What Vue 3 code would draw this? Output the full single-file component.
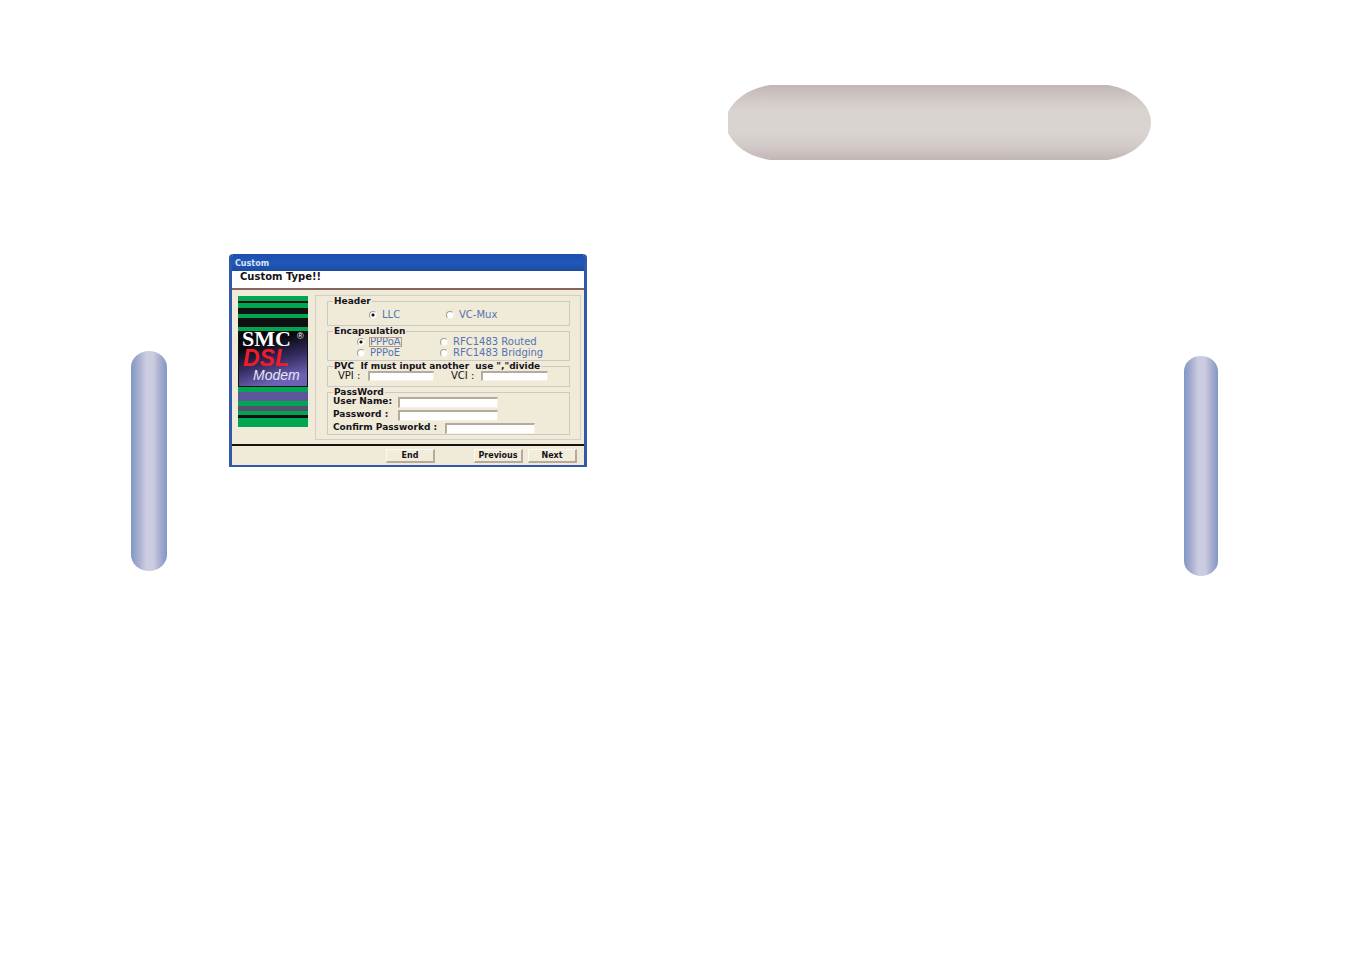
<script setup>
import { ref } from 'vue'
const header = ref('LLC')
const encap = ref('PPPoA')
const stripes = [
  [0, 5, '#00a650'], [5, 2, '#101012'], [7, 5, '#00a650'], [12, 6, '#101012'],
  [18, 4, '#00a650'], [22, 9, '#101012'], [31, 4, '#00a650'],
  [91, 5, '#00a650'], [96, 9, '#5d549c'], [105, 5, '#00a650'], [110, 5, '#564f70'],
  [115, 4, '#00a650'], [119, 3, '#101012'], [122, 9, '#00a650'],
]
</script>

<template>
  <main class="spread">
    <div class="tab tab-left"></div>
    <form class="dialog" @submit.prevent>
      <div class="title">Custom</div>
      <h1 class="heading">Custom Type!!</h1>
      <div class="body">
        <svg class="brand" viewBox="0 0 70 131" preserveAspectRatio="none" role="img" aria-label="SMC DSL Modem">
          <defs>
            <linearGradient id="night" x1="0" y1="0" x2="0.35" y2="1">
              <stop offset="0.3" stop-color="#08080c" />
              <stop offset="0.65" stop-color="#342c60" />
              <stop offset="1" stop-color="#6c62b4" />
            </linearGradient>
          </defs>
          <rect v-for="s in stripes" :key="s[0]" x="0" :y="s[0]" width="70" :height="s[1]" :fill="s[2]" />
          <rect x="0" y="35" width="70" height="56" fill="#101012" />
          <rect x="1" y="35" width="68" height="55" fill="url(#night)" />
          <text x="4" y="50" class="smc">SMC</text>
          <text x="59" y="43" class="reg">®</text>
          <text x="5" y="70" class="dsl">DSL</text>
          <text x="15" y="84" class="modem">Modem</text>
        </svg>
        <div class="panel">
          <fieldset class="group-header">
            <legend>Header</legend>
            <div class="choices">
              <label class="opt"><input v-model="header" type="radio" name="header" value="LLC"><span>LLC</span></label>
              <label class="opt"><input v-model="header" type="radio" name="header" value="VC-Mux"><span>VC-Mux</span></label>
            </div>
          </fieldset>
          <fieldset class="group-encap">
            <legend>Encapsulation</legend>
            <div class="choices">
              <label class="opt"><input v-model="encap" type="radio" name="encap" value="PPPoA"><span class="focus">PPPoA</span></label>
              <label class="opt"><input v-model="encap" type="radio" name="encap" value="Routed"><span>RFC1483 Routed</span></label>
              <label class="opt"><input v-model="encap" type="radio" name="encap" value="PPPoE"><span>PPPoE</span></label>
              <label class="opt"><input v-model="encap" type="radio" name="encap" value="Bridging"><span>RFC1483 Bridging</span></label>
            </div>
          </fieldset>
          <fieldset class="group-pvc">
            <legend>PVC&nbsp; If must input another&nbsp; use ","divide</legend>
            <div class="pvc">
              <label for="vpi">VPI :</label><input id="vpi" type="text">
              <label for="vci">VCI :</label><input id="vci" type="text">
            </div>
          </fieldset>
          <fieldset class="group-pass">
            <legend>PassWord</legend>
            <div class="row"><label for="user">User Name:</label><input id="user" type="text"></div>
            <div class="row"><label for="pass">Password :</label><input id="pass" type="password"></div>
            <div class="row confirm"><label for="again">Confirm Passworkd :</label><input id="again" type="password"></div>
          </fieldset>
        </div>
      </div>
      <div class="footer">
        <button type="button" class="end">End</button>
        <button type="button">Previous</button>
        <button type="submit">Next</button>
      </div>
    </form>
    <svg class="banner" viewBox="0 0 423 75" preserveAspectRatio="none" aria-hidden="true">
      <defs>
        <linearGradient id="pill" x1="0" y1="0" x2="0" y2="1">
          <stop offset="0" stop-color="#c1b6b5" />
          <stop offset="0.2" stop-color="#d2cac8" />
          <stop offset="0.36" stop-color="#d9d4d0" />
          <stop offset="0.64" stop-color="#d9d4d0" />
          <stop offset="0.82" stop-color="#d2cac8" />
          <stop offset="1" stop-color="#c1b6b5" />
        </linearGradient>
      </defs>
      <path d="M42 0H380C405 4 423 20 423 37.500S405 71 380 75H42C22 72 7 62 0 48V27C7 13 22 3 42 0Z" fill="url(#pill)" />
    </svg>
    <div class="tab tab-right"></div>
  </main>
</template>

<style>
body { margin: 0; background: #fff; }
</style>

<style scoped>
.spread {
  display: grid;
  grid-template-columns: 131fr 36fr 62fr 358fr 141fr 423fr 33fr 34fr 133fr;
  align-items: start;
  padding: 85px 0;
  font: bold 9px/10px "DejaVu Sans", sans-serif;
  color: #15131a;
}
.tab {
  height: 220px;
  border-radius: 18px / 16px;
  background: linear-gradient(90deg, #7f98c4, #a9aed0 22%, #cccce1 42%, #cccce1 62%, #a9aed0 80%, #7f98c4);
}
.tab-left { grid-column: 2; margin-top: 266px; }
.tab-right { grid-column: 8; margin-top: 271px; }
.banner { grid-column: 6; width: 100%; height: 75px; display: block; }
.dialog {
  grid-column: 4;
  margin-top: 169px;
  box-sizing: border-box;
  border: solid #3057ab;
  border-width: 0 3px 2px;
  border-radius: 4px 4px 0 0;
  background: #f0ead8;
  overflow: hidden;
}
.title {
  padding: 5px 3px 2px;
  background: linear-gradient(#1a50ae, #2058b8 50%, #1c4ba2);
  color: #dce4f4;
  font-size: 8px;
}
.heading {
  margin: 0;
  padding: 0 8px 5px;
  background: #fff;
  border-bottom: 2px solid #85655f;
  font-size: 10px;
  line-height: 12px;
  font-weight: bold;
}
.body {
  display: grid;
  grid-template-columns: 70px 1fr;
  gap: 7px;
  padding: 5px 3px 4px 6px;
}
.brand { display: block; width: 70px; height: 131px; margin-top: 1px; }
.smc { font: bold 22px "Liberation Serif", serif; fill: #fff; }
.reg { font: 9px "Liberation Sans", sans-serif; fill: #fff; }
.dsl { font: italic bold 23px "Liberation Sans", sans-serif; fill: #ee1c2e; }
.modem { font: italic 14px "Liberation Sans", sans-serif; fill: #e8e6f4; }
.panel { border: 1px solid #d2d0c6; padding: 0 10px 4px 11px; }
fieldset {
  box-sizing: border-box;
  min-width: 0;
  margin: 0;
  padding: 0 5px;
  border: 1px solid #cbcac2;
}
legend { padding: 0 1px; line-height: 10px; white-space: nowrap; }
.group-header { height: 30px; }
.group-encap { height: 35px; }
.group-pvc { height: 26px; }
.group-pass { height: 48px; }
.choices { display: grid; grid-template-columns: 83px 1fr; padding-left: 24px; }
.group-header .choices { grid-template-columns: 77px 1fr; padding: 3px 0 0 36px; }
.opt { display: flex; align-items: center; gap: 5px; height: 11px; color: #5474b4; font-size: 10px; font-weight: normal; white-space: nowrap; }
.opt input {
  appearance: none;
  box-sizing: border-box;
  flex: none;
  width: 8px;
  height: 8px;
  margin: 0;
  border: 1px solid;
  border-color: #a49f92 #f6f3ea #f6f3ea #a49f92;
  border-radius: 50%;
  background: #fff;
}
.opt input:checked { background: radial-gradient(circle, #111 1px, #fff 2px); }
.focus { outline: 1px solid #b39a82; line-height: 8px; }
input[type="text"], input[type="password"] {
  box-sizing: border-box;
  height: 11px;
  min-width: 0;
  margin: 0;
  padding: 0 2px;
  border: solid;
  border-width: 2px 1px 1px 2px;
  border-color: #b5aaa0 #f4f0e4 #f4f0e4 #b5aaa0;
  background: #fff;
  font: inherit;
}
.pvc { display: grid; grid-template-columns: 30px 66px 17px 30px 67px; padding-left: 5px; line-height: 9px; }
.pvc label { white-space: nowrap; font-weight: normal; font-size: 10px; }
.pvc input { height: 10px; }
#vci { grid-column: 5; }
.pvc label[for="vci"] { grid-column: 4; }
.row { display: flex; align-items: flex-start; height: 11px; margin-bottom: 2px; line-height: 8px; white-space: nowrap; }
.row label { width: 65px; }
.row input { width: 100px; }
.row.confirm label { width: 112px; }
.row.confirm input { width: 90px; }
.footer {
  display: flex;
  justify-content: flex-end;
  gap: 5px;
  border-top: 2px solid #16100f;
  padding: 3px 7px 2px;
}
button {
  box-sizing: border-box;
  width: 49px;
  height: 14px;
  padding: 0;
  border: solid;
  border-width: 1px 2px 2px 1px;
  border-color: #fbf9f2 #b5aa9c #b5aa9c #fbf9f2;
  background: #f2ecdb;
  color: #15131a;
  font: bold 8px/10px "DejaVu Sans", sans-serif;
}
.end { margin-right: 34px; }
</style>
